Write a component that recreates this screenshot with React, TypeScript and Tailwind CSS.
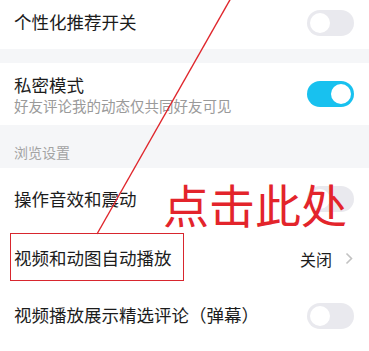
import React from "react";

function Toggle({ on }: { on?: boolean }) {
  return (
    <div
      className={
        "relative h-[26px] w-[47px] shrink-0 rounded-full " +
        (on ? "bg-[#18c1ef]" : "bg-[#e9e9ee]")
      }
    >
      <div
        className={
          "absolute top-[3px] h-[20px] w-[20px] rounded-full bg-white " +
          (on ? "left-[24px]" : "left-[3px]")
        }
      />
    </div>
  );
}

export default function App() {
  return (
    <div
      className="relative h-[351px] w-[369px] overflow-hidden bg-white text-[#1c1c1c]"
      style={{ fontFamily: '"Noto Sans CJK SC", "Noto Sans", sans-serif' }}
    >
      {/* 个性化推荐 */}
      <div className="flex h-[49px] items-center justify-between pb-[4px] pl-[14px] pr-[15px]">
        <span className="text-[17.5px]">个性化推荐开关</span>
        <Toggle />
      </div>
      <div className="h-[14px] bg-[#f5f6f8]" />

      {/* 私密模式 */}
      <div className="flex h-[62px] items-center justify-between pl-[14px] pr-[15px]">
        <div className="flex flex-col pt-[2px]">
          <span className="text-[17.5px] leading-[22px]">私密模式</span>
          <span className="text-[14.5px] leading-[20px] text-[#9a9a9a]">
            好友评论我的动态仅共同好友可见
          </span>
        </div>
        <Toggle on />
      </div>

      {/* 浏览设置 */}
      <div className="flex h-[43px] items-end bg-[#f5f6f8] pb-[6px] pl-[14px]">
        <span className="text-[14px] leading-[20px] text-[#a3a3a3]">浏览设置</span>
      </div>

      <div className="flex h-[62px] items-center justify-between pl-[14px] pr-[15px]">
        <span className="text-[17.5px]">操作音效和震动</span>
        <Toggle />
      </div>
      <div className="flex h-[57px] items-center justify-between pl-[14px] pr-[16px]">
        <span className="text-[17.5px]">视频和动图自动播放</span>
        <div className="flex items-center gap-[13px]">
          <span className="text-[16px]">关闭</span>
          <svg width="8" height="13" viewBox="0 0 8 13">
            <polyline
              points="1.5,1.5 6.5,6.5 1.5,11.5"
              fill="none"
              stroke="#c2c2c2"
              strokeWidth="1.6"
            />
          </svg>
        </div>
      </div>
      <div className="flex h-[57px] items-center justify-between pl-[14px] pr-[15px]">
        <span className="text-[17.5px]">视频播放展示精选评论（弹幕）</span>
        <Toggle />
      </div>

      {/* 标注 */}
      <svg className="pointer-events-none absolute left-0 top-0" width="369" height="351">
        <line x1="231" y1="-2" x2="97" y2="234" stroke="#e0262c" strokeWidth="1.4" />
      </svg>
      <div className="pointer-events-none absolute left-[10px] top-[233px] h-[48px] w-[174px] border-[1.5px] border-[#d8262e]" />
      <div className="pointer-events-none absolute left-[163px] top-[180px] text-[46px] font-normal leading-none text-[#e3242b]">
        点击此处
      </div>
    </div>
  );
}
